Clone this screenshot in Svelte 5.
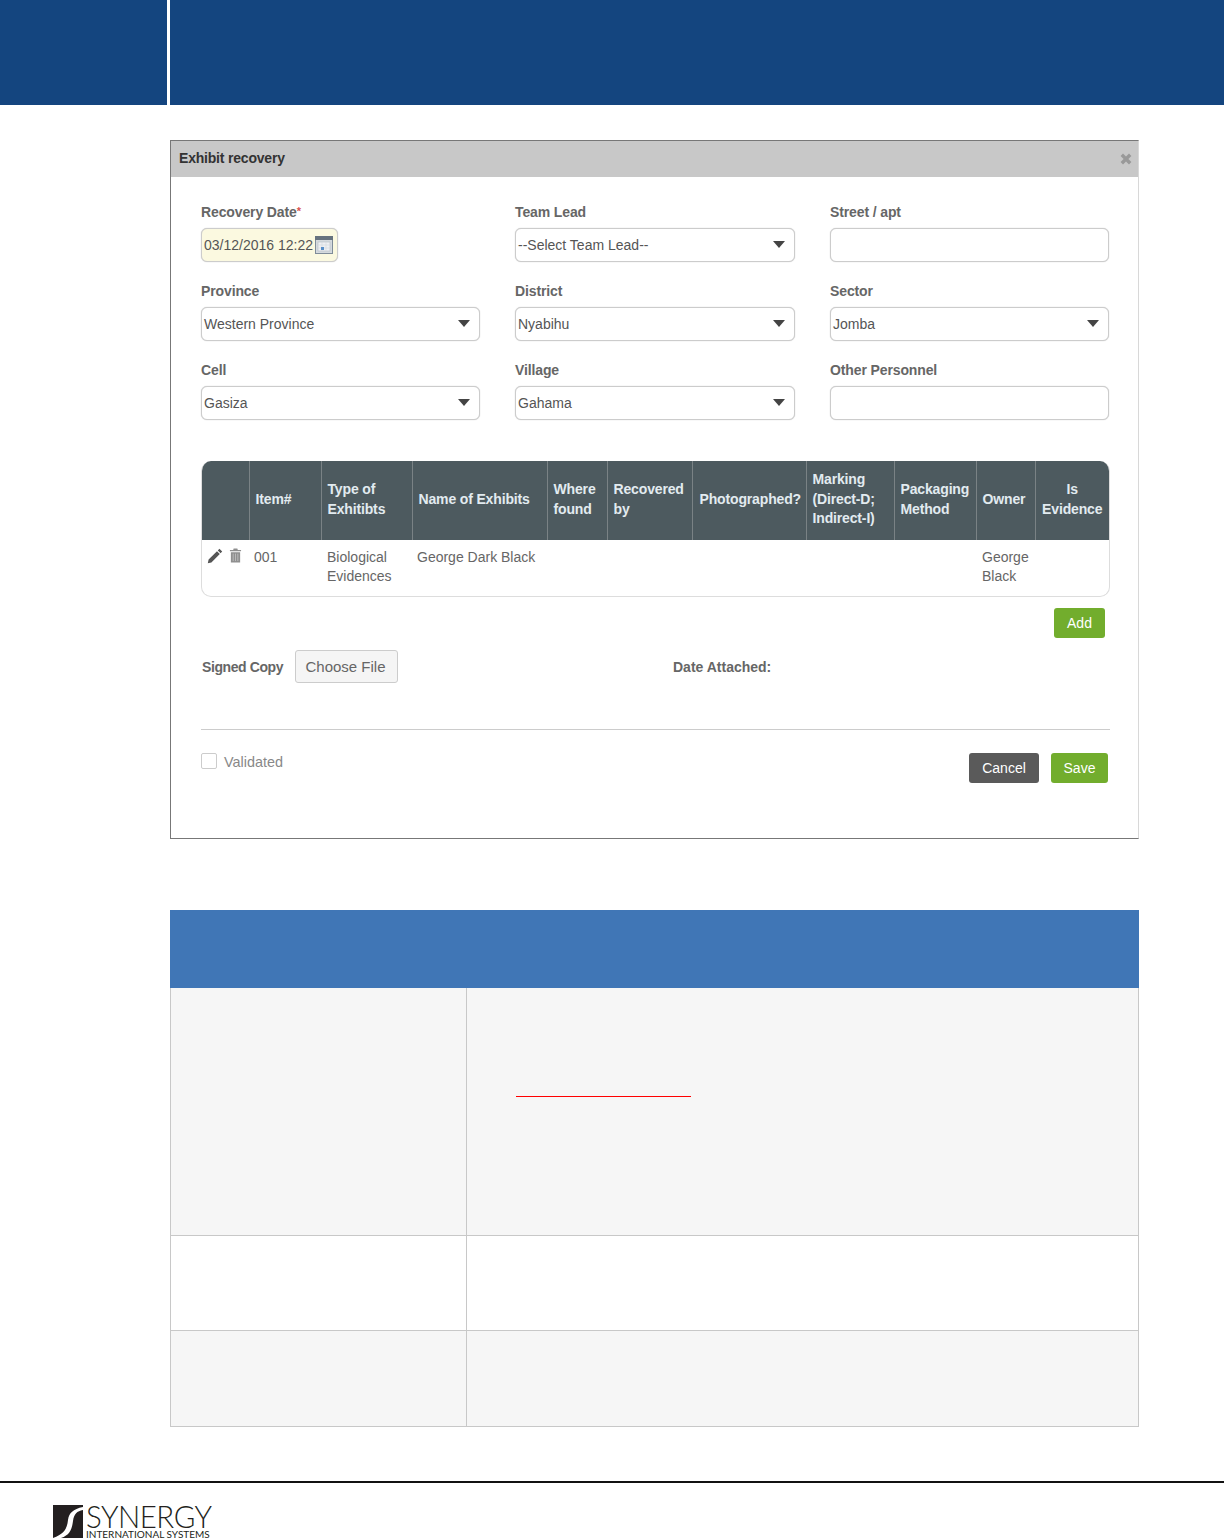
<script>
  const fields = [
    { label: "Recovery Date", required: true, kind: "date", value: "03/12/2016 12:22" },
    { label: "Team Lead", kind: "select", value: "--Select Team Lead--" },
    { label: "Street / apt", kind: "input" },
    { label: "Province", kind: "select", value: "Western Province" },
    { label: "District", kind: "select", value: "Nyabihu" },
    { label: "Sector", kind: "select", value: "Jomba" },
    { label: "Cell", kind: "select", value: "Gasiza" },
    { label: "Village", kind: "select", value: "Gahama" },
    { label: "Other Personnel", kind: "input" }
  ]

  const columns = [
    { title: [""] },
    { title: ["Item#"] },
    { title: ["Type of", "Exhitibts"] },
    { title: ["Name of Exhibits"] },
    { title: ["Where", "found"] },
    { title: ["Recovered", "by"] },
    { title: ["Photographed?"] },
    { title: ["Marking", "(Direct-D;", "Indirect-I)"] },
    { title: ["Packaging", "Method"] },
    { title: ["Owner"] },
    { title: ["Is", "Evidence"], center: true }
  ]

  const docRows = ["tall", "mid", "mid2"]
</script>

<div class="page">
  <header class="banner">
    <div class="banner-left"></div>
    <div class="banner-right"></div>
  </header>

  <section class="modal">
    <div class="modal-title">
      <span>Exhibit recovery</span>
      <svg class="close" viewBox="0 0 12 12" width="12" height="12" aria-hidden="true">
        <path d="M3 0.6 6 3.6 9 0.6 11.4 3 8.4 6 11.4 9 9 11.4 6 8.4 3 11.4 0.6 9 3.6 6 0.6 3Z" fill="#999" />
      </svg>
    </div>

    <div class="modal-body">
      <div class="form-grid">
        {#each fields as field}
          <div class="field">
            <div class="label">{field.label}{#if field.required}<span class="req">*</span>{/if}</div>
            {#if field.kind === "date"}
              <div class="control date">
                <span>{field.value}</span>
                <svg viewBox="0 0 18 18" width="18" height="18" aria-hidden="true">
                  <rect x="0.5" y="0.5" width="17" height="17" fill="#d5dade" stroke="#7f8c99" />
                  <rect x="0" y="0" width="18" height="4" fill="#66727e" />
                  <rect x="3" y="6" width="12" height="9" fill="#eef0f3" stroke="#b4bcc4" stroke-width="0.6" />
                  <path d="M3 9H15M3 12H15M7 6V15M11 6V15" stroke="#d3d8dd" stroke-width="0.6" />
                  <rect x="6" y="11" width="3" height="3" fill="#5a8fc8" />
                </svg>
              </div>
            {:else if field.kind === "select"}
              <div class="control select">{field.value}</div>
            {:else}
              <input class="control" type="text" />
            {/if}
          </div>
        {/each}
      </div>

      <div class="table-wrap">
        <table>
          <thead>
            <tr>
              {#each columns as col}
                <th class:center={col.center}>
                  {#each col.title as line, i}{#if i > 0}<br />{/if}{line}{/each}
                </th>
              {/each}
            </tr>
          </thead>
          <tbody>
            <tr>
              <td class="actions">
                <svg viewBox="0 0 16 16" width="16" height="16" aria-hidden="true">
                  <path d="M12.4 0.8 15.2 3.6 13.6 5.2 10.8 2.4ZM10 3.2 12.8 6 4.4 14.4 0.8 15.2 1.6 11.6Z" fill="#555" />
                </svg>
                <svg viewBox="0 0 14 16" width="13" height="15" aria-hidden="true">
                  <path d="M5 0.5H9L9.5 2H13V3.5H1V2H4.5ZM2 4.5H12V15.5H2Z" fill="#8f8f8f" />
                  <path d="M4.5 6V14M7 6V14M9.5 6V14" stroke="#c9c9c9" stroke-width="0.8" />
                </svg>
              </td>
              <td>001</td>
              <td>Biological Evidences</td>
              <td>George Dark Black</td>
              <td></td>
              <td></td>
              <td></td>
              <td></td>
              <td></td>
              <td>George Black</td>
              <td></td>
            </tr>
          </tbody>
        </table>
      </div>

      <div class="add-row">
        <button class="btn green add">Add</button>
      </div>

      <div class="file-row">
        <span class="signed">Signed Copy</span>
        <button class="choose">Choose File</button>
        <span class="attached">Date Attached:</span>
      </div>

      <div class="rule"></div>

      <div class="bottom-row">
        <label class="validated"><span class="check"></span><span class="check-text">Validated</span></label>
        <div class="bottom-buttons">
          <button class="btn dark cancel">Cancel</button>
          <button class="btn green save">Save</button>
        </div>
      </div>
    </div>
  </section>

  <section class="doc-table">
    <div class="doc-head">
      <div class="doc-head-a"></div>
      <div class="doc-head-b"></div>
    </div>
    {#each docRows as row}
      <div class="doc-row {row}">
        <div class="doc-a"></div>
        <div class="doc-b">
          {#if row === "tall"}<div class="red-line"></div>{/if}
        </div>
      </div>
    {/each}
  </section>

  <footer class="footer">
    <div class="footer-logo">
      <svg class="mark" viewBox="0 0 30 33" width="30" height="33" aria-hidden="true">
        <rect width="30" height="33" fill="#231f20" />
        <path d="M30 2C20 4 16 8 15 15C14 24 11 29 0 33H8C17 30 19 24 20 16C21 9 24 6 30 5Z" fill="#fff" />
      </svg>
      <div class="wordmark">
        <div class="word-top">SYNERGY</div>
        <div class="word-sub">INTERNATIONAL SYSTEMS</div>
      </div>
    </div>
  </footer>
</div>

<style>
  :global(body) {
    margin: 0;
    background: #fff;
  }

  .page {
    width: 1224px;
    height: 1538px;
    overflow: hidden;
    font-family: "Liberation Sans", Arial, sans-serif;
    font-size: 14px;
    color: #666;
  }

  .banner {
    display: flex;
    height: 105px;
  }

  .banner-left {
    width: 167px;
    background: #14457f;
  }

  .banner-right {
    flex: 1;
    margin-left: 3px;
    background: #14457f;
  }

  .modal {
    box-sizing: border-box;
    width: 969px;
    height: 699px;
    margin: 35px 0 0 170px;
    border: 1px solid #d8d8d8;
    border-top-color: #777;
    border-left-color: #777;
    border-bottom-color: #777;
  }

  .modal-title {
    display: flex;
    justify-content: space-between;
    align-items: center;
    height: 36px;
    padding: 0 6px 2px 8px;
    box-sizing: border-box;
    background: #c8c8c8;
    color: #333;
    font-weight: bold;
    letter-spacing: -0.2px;
  }

  .close {
    margin-top: 2px;
  }

  .modal-body {
    padding: 25px 28px 0 30px;
  }

  .form-grid {
    display: grid;
    grid-template-columns: 279px 280px 279px;
    column-gap: 35px;
    row-gap: 19px;
  }

  .label {
    height: 20px;
    line-height: 20px;
    margin-bottom: 6px;
    font-weight: bold;
    color: #666;
    letter-spacing: -0.12px;
  }

  .req {
    color: #d9534f;
    font-size: 11px;
    line-height: 0;
    vertical-align: 2px;
  }

  .control {
    display: block;
    box-sizing: border-box;
    width: 100%;
    height: 34px;
    margin: 0;
    padding: 0 2px;
    font: inherit;
    line-height: 32px;
    background: #fff;
    border: 1px solid #ccc;
    border-radius: 6px;
    box-shadow: 0 0 1px #bbb;
    color: #555;
    outline: none;
  }

  .date {
    display: flex;
    align-items: center;
    justify-content: space-between;
    width: 137px;
    padding-right: 4px;
    background: #fbf9e0;
    color: #555;
  }

  .date svg {
    flex: none;
  }

  .select {
    position: relative;
  }

  .select::after {
    content: "";
    position: absolute;
    top: 12px;
    right: 9px;
    border-left: 6px solid transparent;
    border-right: 6px solid transparent;
    border-top: 7px solid #444;
  }

  .table-wrap {
    box-sizing: border-box;
    width: 909px;
    margin-top: 41px;
    border: 1px solid #ddd;
    border-top: 0;
    border-radius: 10px;
    overflow: hidden;
  }

  table {
    width: 100%;
    table-layout: fixed;
    border-collapse: collapse;
  }

  th {
    height: 79px;
    box-sizing: border-box;
    padding: 0 6px 2px;
    background: #4d5a5f;
    border-left: 1px solid #7a8285;
    color: #e2ebf0;
    font-weight: bold;
    line-height: 19.5px;
    letter-spacing: -0.15px;
    text-align: left;
    white-space: nowrap;
  }

  th:first-child {
    border-left: 0;
  }

  th.center {
    text-align: center;
  }

  th:nth-child(1) { width: 47px; }
  th:nth-child(2) { width: 72px; }
  th:nth-child(3) { width: 91px; }
  th:nth-child(4) { width: 135px; }
  th:nth-child(5) { width: 60px; }
  th:nth-child(6) { width: 85px; }
  th:nth-child(7) { width: 114px; padding-left: 7px; }
  th:nth-child(8) { width: 88px; }
  th:nth-child(9) { width: 82px; }
  th:nth-child(10) { width: 59px; }

  td {
    padding: 8px 5px 10px 6px;
    vertical-align: top;
    line-height: 19px;
    color: #666;
  }

  td:nth-child(2), td:nth-child(4) {
    padding-left: 5px;
  }

  td.actions {
    display: flex;
    gap: 6px;
    padding: 8px 0 0 5px;
  }

  .add-row {
    display: flex;
    justify-content: flex-end;
    padding-top: 11px;
    padding-right: 5px;
  }

  .btn {
    box-sizing: border-box;
    height: 30px;
    padding: 0;
    border: 0;
    border-radius: 3px;
    font: inherit;
    color: #fff;
  }

  .green {
    background: #72ad2d;
  }

  .dark {
    background: #5a5a5a;
  }

  .add {
    width: 51px;
  }

  .file-row {
    display: flex;
    align-items: center;
    height: 33px;
    margin-top: 12px;
    padding-left: 1px;
  }

  .signed, .attached {
    font-weight: bold;
    color: #666;
  }

  .signed {
    width: 93px;
    letter-spacing: -0.4px;
  }

  .choose {
    box-sizing: border-box;
    width: 103px;
    height: 33px;
    padding: 0 2px 0 0;
    background: #f5f5f5;
    border: 1px solid #ccc;
    border-radius: 3px;
    font: inherit;
    font-size: 15px;
    color: #666;
  }

  .attached {
    margin-left: 275px;
  }

  .rule {
    width: 909px;
    height: 1px;
    margin-top: 46px;
    background: #ccc;
  }

  .bottom-row {
    display: flex;
    justify-content: space-between;
    align-items: flex-start;
    width: 907px;
    padding-top: 23px;
  }

  .validated {
    display: flex;
    align-items: center;
    gap: 7px;
    height: 16px;
    font-size: 14.4px;
    color: #888;
  }

  .check-text {
    padding-top: 2px;
  }

  .check {
    box-sizing: border-box;
    width: 16px;
    height: 16px;
    border: 1px solid #ccc;
    border-radius: 2px;
  }

  .bottom-buttons {
    display: flex;
    gap: 12px;
  }

  .cancel {
    width: 70px;
  }

  .save {
    width: 57px;
  }

  .doc-table {
    width: 969px;
    margin: 71px 0 0 170px;
  }

  .doc-head {
    display: grid;
    grid-template-columns: 296px 1fr;
    height: 78px;
    background: #4076b6;
  }

  .doc-head-b {
    border-left: 1px solid #4076b6;
  }

  .doc-row {
    box-sizing: border-box;
    display: grid;
    grid-template-columns: 295px 1fr;
    border: 1px solid #c8c8c8;
    border-top: 0;
  }

  .doc-row.tall {
    height: 248px;
    background: #f6f6f6;
  }

  .doc-row.mid {
    height: 95px;
    background: #fff;
  }

  .doc-row.mid2 {
    height: 96px;
    background: #f6f6f6;
  }

  .doc-b {
    border-left: 1px solid #c8c8c8;
  }

  .red-line {
    width: 175px;
    height: 1px;
    margin: 108px 0 0 49px;
    background: #f00;
  }

  .footer {
    margin-top: 54px;
    border-top: 2px solid #111;
  }

  .footer-logo {
    display: flex;
    margin: 22px 0 0 53px;
    color: #231f20;
  }

  .mark {
    flex: none;
    margin-right: 3px;
  }

  .wordmark {
    white-space: nowrap;
  }

  .word-top {
    font-family: Lato, "Liberation Sans", sans-serif;
    font-weight: 300;
    font-size: 31px;
    line-height: 22px;
    letter-spacing: -0.5px;
    transform: scaleX(0.95);
    transform-origin: left top;
  }

  .word-sub {
    margin-top: 2px;
    font-family: Lato, "Liberation Sans", sans-serif;
    font-size: 10px;
    line-height: 11px;
  }
</style>
